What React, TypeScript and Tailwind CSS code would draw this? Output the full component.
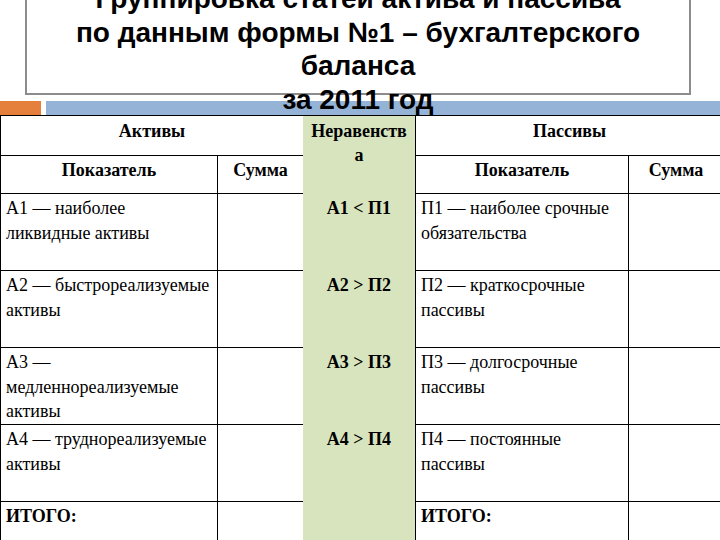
type Row = {
  active: string[]
  ineq: string
  passive: string[]
  tall?: boolean
}

const rows: Row[] = [
  { active: ['А1 — наиболее', 'ликвидные активы'], ineq: 'А1 < П1', passive: ['П1 — наиболее срочные', 'обязательства'] },
  { active: ['А2 — быстрореализуемые', 'активы'], ineq: 'А2 > П2', passive: ['П2 — краткосрочные', 'пассивы'] },
  { active: ['А3 —', 'медленнореализуемые', 'активы'], ineq: 'А3 > П3', passive: ['П3 — долгосрочные', 'пассивы'], tall: true },
  { active: ['А4 — труднореализуемые', 'активы'], ineq: 'А4 > П4', passive: ['П4 — постоянные', 'пассивы'] },
]

function Lines({ lines }: { lines: string[] }) {
  return (
    <>
      {lines.map((l, i) => (
        <div key={i} className="whitespace-nowrap">{l}</div>
      ))}
    </>
  )
}

export default function App() {
  return (
    <div className="h-[540px] w-[720px] overflow-hidden bg-white text-black">
      {/* title box, top is cut off by the slide edge; last line runs over the bar */}
      <div className="relative z-10 -mt-[24px] ml-[25px] h-[119px] w-[666px] border-2 border-[#8c8c8c] pt-[4px] text-center [font-family:Liberation_Sans,Arial,sans-serif] text-[28px] font-bold leading-[33.5px]">
        <div>Группировка статей актива и пассива</div>
        <div>по данным формы №1 – бухгалтерского</div>
        <div>баланса</div>
        <div>за 2011 год</div>
      </div>

      {/* accent bar */}
      <div className="mt-[6px] flex h-[14px] gap-[5px]">
        <div className="w-[41px] bg-[#e4803c]" />
        <div className="flex-1 bg-[#95b3d7]" />
      </div>

      {/* table */}
      <div className="grid w-[724px] grid-cols-[217px_85px_113px_213px_94px] grid-rows-[40px_38px_77px_77px_77px_77px_60px] border-l border-t border-black [font-family:Liberation_Serif,Times_New_Roman,serif] text-[18px] leading-[25px]">
        <div className="col-span-2 border-b border-black pt-[3px] text-center font-bold">Активы</div>
        <div className="row-span-2 border-r border-black bg-[#d7e4bd] pt-[3px] text-center font-bold leading-[24px]">
          Неравенств
          <br />а
        </div>
        <div className="col-span-2 border-b border-black pt-[3px] text-center font-bold">Пассивы</div>

        <div className="border-b border-r border-black pt-[2px] text-center font-bold">Показатель</div>
        <div className="border-b border-black pt-[2px] text-center font-bold">Сумма</div>
        <div className="border-b border-r border-black pt-[2px] text-center font-bold">Показатель</div>
        <div className="border-b border-black pt-[2px] text-center font-bold">Сумма</div>

        {rows.map((r, i) => (
          <div key={i} className="contents">
            <div className={`border-b border-r border-black px-[5px] pt-[2px] ${r.tall ? 'leading-[24.5px]' : ''}`}>
              <Lines lines={r.active} />
            </div>
            <div className="border-b border-black" />
            <div className="border-r border-black bg-[#d7e4bd] pt-[2px] text-center font-bold">{r.ineq}</div>
            <div className="border-b border-r border-black px-[5px] pt-[2px]">
              <Lines lines={r.passive} />
            </div>
            <div className="border-b border-black" />
          </div>
        ))}

        <div className="border-b border-r border-black px-[5px] pt-[2px] font-bold">ИТОГО:</div>
        <div className="border-b border-black" />
        <div className="border-r border-black bg-[#d7e4bd]" />
        <div className="border-b border-r border-black px-[5px] pt-[2px] font-bold">ИТОГО:</div>
        <div className="border-b border-black" />
      </div>
    </div>
  )
}
